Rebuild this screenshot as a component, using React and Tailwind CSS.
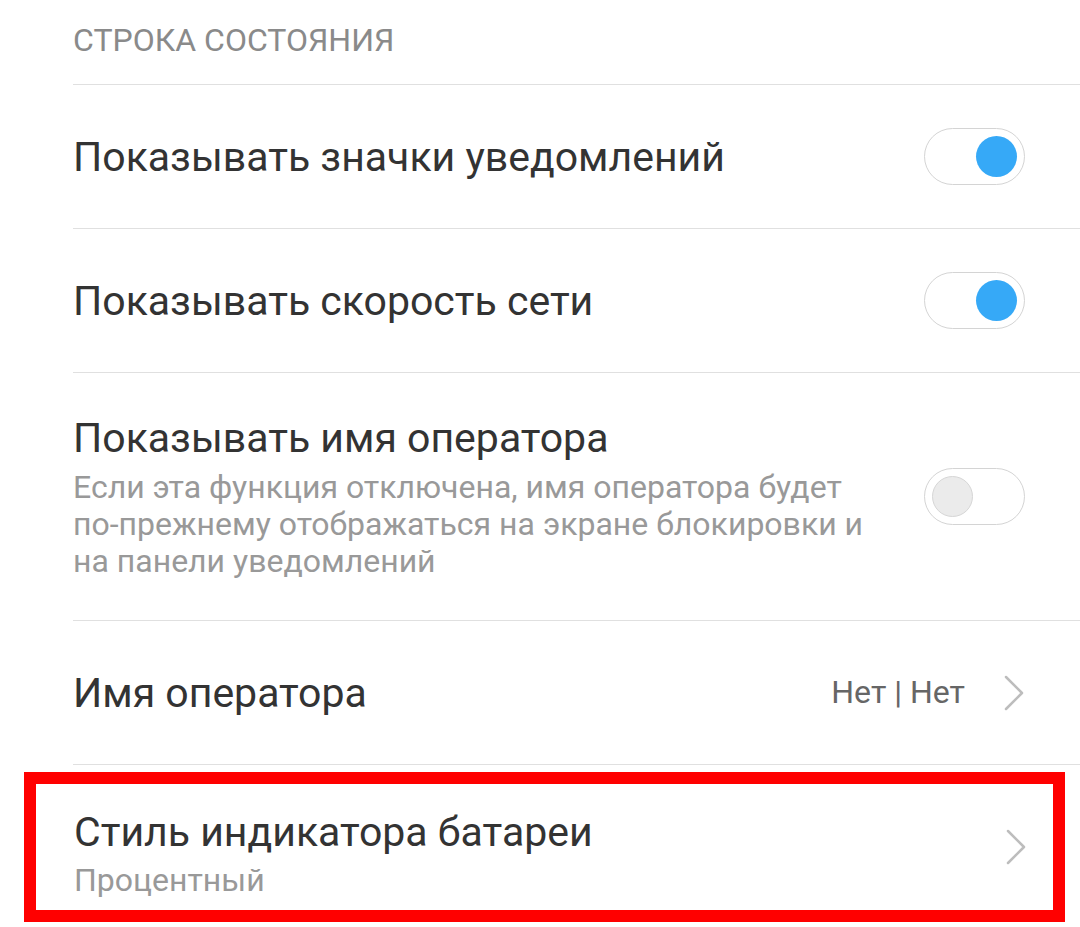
import React from 'react';

const font = { fontFamily: 'Roboto, "Noto Sans", sans-serif' };

const Toggle = ({ on }) => (
  <div
    className={`flex h-[57px] w-[101px] shrink-0 items-center rounded-full border border-[#d4d4d4] bg-white px-[7px] ${
      on ? 'justify-end' : 'justify-start'
    }`}
  >
    {on ? (
      <div className="h-[41px] w-[41px] rounded-full bg-[#36a9f7]" />
    ) : (
      <div className="h-[41px] w-[41px] rounded-full border border-[#d6d6d6] bg-[#ebebeb]" />
    )}
  </div>
);

const Chevron = () => (
  <svg width="22" height="36" viewBox="0 0 22 36" className="shrink-0">
    <path d="M3 2 L19 18 L3 34" fill="none" stroke="#bdbdbd" strokeWidth="2.5" strokeLinecap="round" strokeLinejoin="round" />
  </svg>
);

const Row = ({ children, className = '' }) => (
  <div className={`flex items-center border-t border-[#e0e0e0] pr-[55px] ${className}`}>{children}</div>
);

export default function App() {
  return (
    <div className="h-[927px] w-[1080px] overflow-hidden bg-white" style={font}>
      <div className="pl-[73px]">
        <div className="flex h-[84px] items-start pt-[21px] text-[32px] leading-[38px] text-[#8a8a8a]">
          СТРОКА СОСТОЯНИЯ
        </div>

        <Row className="h-[144px]">
          <div className="flex-1 text-[41px] leading-[50px] text-[#333333]">Показывать значки уведомлений</div>
          <Toggle on />
        </Row>

        <Row className="h-[144px]">
          <div className="flex-1 text-[41px] leading-[50px] text-[#333333]">Показывать скорость сети</div>
          <Toggle on />
        </Row>

        <Row className="h-[248px]">
          <div className="flex-1">
            <div className="text-[41px] leading-[50px] text-[#333333]">Показывать имя оператора</div>
            <div className="mt-[6px] whitespace-nowrap text-[32px] leading-[37px] text-[#999999]">
              Если эта функция отключена, имя оператора будет
              <br />
              по-прежнему отображаться на экране блокировки и
              <br />
              на панели уведомлений
            </div>
          </div>
          <Toggle on={false} />
        </Row>

        <Row className="h-[144px]">
          <div className="flex-1 text-[41px] leading-[50px] text-[#333333]">Имя оператора</div>
          <div className="mr-[38px] text-[32px] leading-[37px] text-[#666666]">Нет | Нет</div>
          <Chevron />
        </Row>

        <div className="border-t border-[#e0e0e0]" />
      </div>

      <div className="ml-[24px] mt-[7px] flex h-[150px] w-[1041px] items-center border-[12px] border-[#ff0000] pl-[38px] pr-[26px]">
        <div className="flex-1 self-start pt-[23px]">
          <div className="text-[41px] leading-[50px] text-[#333333]">Стиль индикатора батареи</div>
          <div className="mt-[5px] text-[32px] leading-[37px] text-[#999999]">Процентный</div>
        </div>
        <Chevron />
      </div>
    </div>
  );
}
